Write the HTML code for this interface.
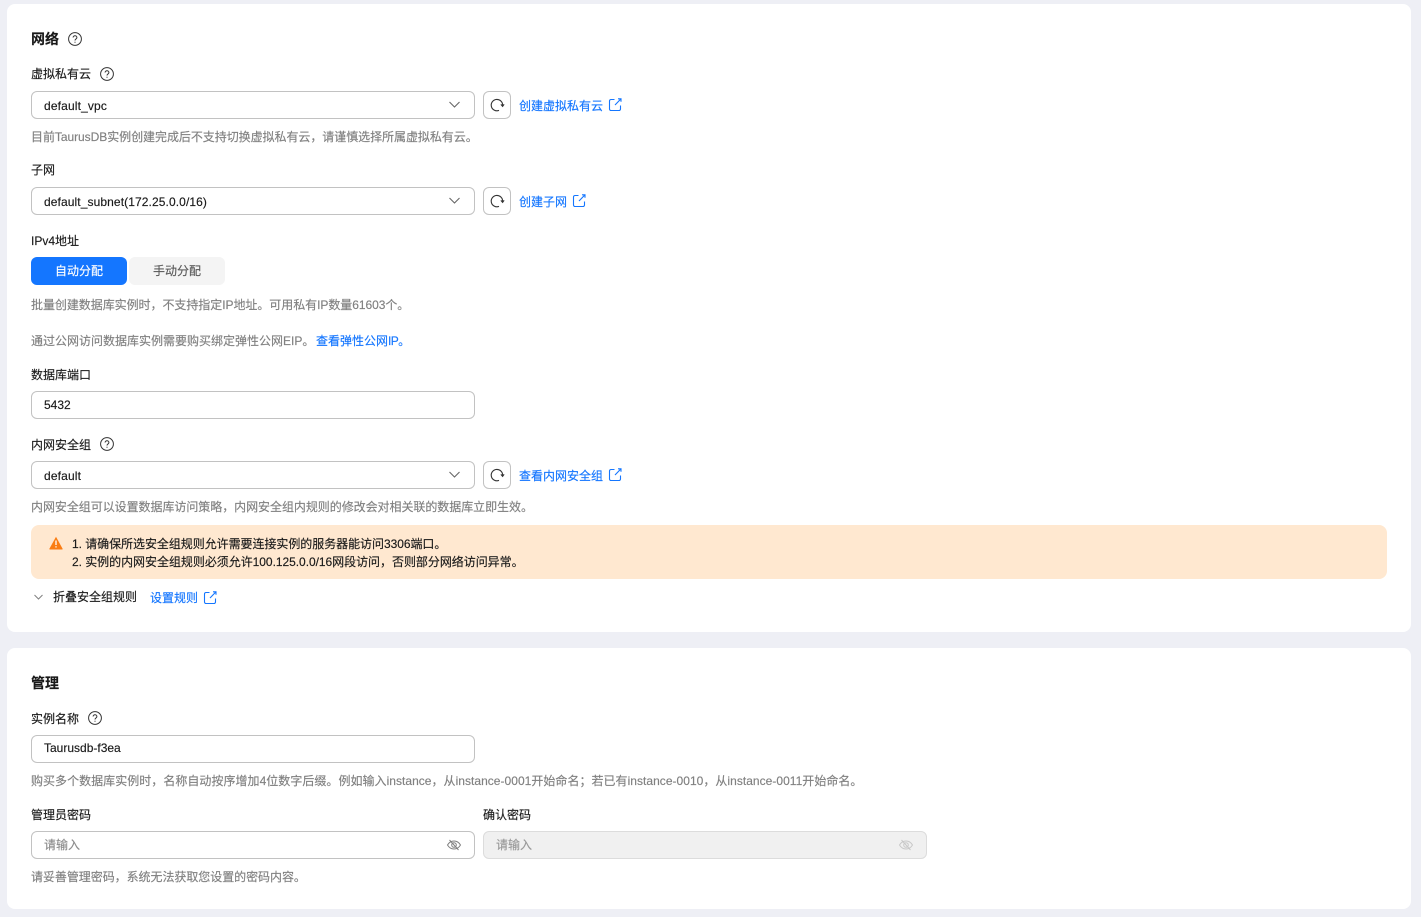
<!DOCTYPE html>
<html lang="zh"><head><meta charset="utf-8"><title>网络</title>
<style>
html,body{margin:0;padding:0;width:1421px;height:917px;overflow:hidden;background:#eeeff5}
body{position:relative;font-family:"Liberation Sans","Noto Sans CJK SC",sans-serif;font-size:12px;color:#191919}
.card{position:absolute;left:7px;width:1404px;background:#fff;border-radius:8px}
.t{position:absolute;white-space:nowrap;line-height:18px;height:18px;-webkit-text-stroke:.15px currentColor}
.h{font-size:14px;font-weight:700;line-height:20px;height:20px;color:#191919}
.g{color:#808080}
.l{color:#1476ff}
.box{position:absolute;box-sizing:border-box;height:28px;border:1px solid #c2c2c2;border-radius:6px;background:#fff}
svg{position:absolute;overflow:visible;fill:none}
</style></head><body>
<div class="card" style="top:4px;height:628px"></div>
<div class="card" style="top:648px;height:261px"></div>

<div class="t h" style="left:31px;top:29px">网络</div>
<svg style="left:68px;top:32px" width="14" height="14" viewBox="0 0 14 14" stroke="#333"><circle cx="7" cy="7" r="6.4"/><path d="M5.100 5.500C5.100 4.400 6 3.800 7 3.800s1.900.7 1.900 1.700c0 1.500-1.900 1.500-1.900 3"/><path d="M7 9.700v1"/></svg>

<div class="t" style="left:31px;top:65px">虚拟私有云</div>
<svg style="left:100px;top:67px" width="14" height="14" viewBox="0 0 14 14" stroke="#333"><circle cx="7" cy="7" r="6.4"/><path d="M5.100 5.500C5.100 4.400 6 3.800 7 3.800s1.900.7 1.900 1.700c0 1.500-1.900 1.500-1.900 3"/><path d="M7 9.700v1"/></svg>

<div class="box" style="left:31px;top:91px;width:444px"></div>
<div class="t" style="left:44px;top:97px;letter-spacing:.15px">default_vpc</div>
<svg style="left:449px;top:101px" width="11" height="7" viewBox="0 0 11 7" stroke="#666" stroke-width="1.100"><path d="M.5 1l5 5 5-5"/></svg>
<div class="box" style="left:483px;top:91px;width:28px"></div>
<svg style="left:490px;top:98px" width="14" height="14" viewBox="0 0 14 14" stroke="#333" stroke-width="1.100"><path d="M9 12.400A5.700 5.700 0 1 1 12.600 7.600"/><path d="M10.900 6.400l1.700 2 1.500-2.100"/></svg>
<div class="t l" style="left:519px;top:97px">创建虚拟私有云</div>
<svg style="left:609px;top:98px" width="13" height="13" viewBox="0 0 13 13" stroke="#1476ff" stroke-width="1.100"><path d="M5.500 1.500H2A1.500 1.500 0 0 0 .5 3v8A1.500 1.500 0 0 0 2 12.500h8A1.500 1.500 0 0 0 11.500 11V7.500"/><path d="M6 7l5.800-6M9 .8h3v3"/></svg>
<div class="t g" style="left:31px;top:128px;letter-spacing:-.05px">目前TaurusDB实例创建完成后不支持切换虚拟私有云，请谨慎选择所属虚拟私有云。</div>

<div class="t" style="left:31px;top:161px">子网</div>
<div class="box" style="left:31px;top:187px;width:444px"></div>
<div class="t" style="left:44px;top:193px;letter-spacing:.1px">default_subnet(172.25.0.0/16)</div>
<svg style="left:449px;top:197px" width="11" height="7" viewBox="0 0 11 7" stroke="#666" stroke-width="1.100"><path d="M.5 1l5 5 5-5"/></svg>
<div class="box" style="left:483px;top:187px;width:28px"></div>
<svg style="left:490px;top:194px" width="14" height="14" viewBox="0 0 14 14" stroke="#333" stroke-width="1.100"><path d="M9 12.400A5.700 5.700 0 1 1 12.600 7.600"/><path d="M10.900 6.400l1.700 2 1.500-2.100"/></svg>
<div class="t l" style="left:519px;top:193px">创建子网</div>
<svg style="left:573px;top:194px" width="13" height="13" viewBox="0 0 13 13" stroke="#1476ff" stroke-width="1.100"><path d="M5.500 1.500H2A1.500 1.500 0 0 0 .5 3v8A1.500 1.500 0 0 0 2 12.500h8A1.500 1.500 0 0 0 11.500 11V7.500"/><path d="M6 7l5.800-6M9 .8h3v3"/></svg>

<div class="t" style="left:31px;top:232px">IPv4地址</div>
<div class="t" style="left:31px;top:257px;width:96px;height:28px;line-height:28px;background:#1476ff;border-radius:6px;color:#fff;text-align:center;-webkit-text-stroke:.15px #fff">自动分配</div>
<div class="t" style="left:129px;top:257px;width:96px;height:28px;line-height:28px;background:#f4f4f4;border-radius:6px;color:#595959;text-align:center">手动分配</div>
<div class="t g" style="left:31px;top:296px;letter-spacing:-.05px">批量创建数据库实例时，不支持指定IP地址。可用私有IP数量61603个。</div>
<div class="t g" style="left:31px;top:332px">通过公网访问数据库实例需要购买绑定弹性公网EIP。</div>
<div class="t l" style="left:316px;top:332px">查看弹性公网<span style="letter-spacing:-.6px">IP</span>。</div>

<div class="t" style="left:31px;top:366px">数据库端口</div>
<div class="box" style="left:31px;top:391px;width:444px"></div>
<div class="t" style="left:44px;top:396px">5432</div>

<div class="t" style="left:31px;top:436px">内网安全组</div>
<svg style="left:100px;top:437px" width="14" height="14" viewBox="0 0 14 14" stroke="#333"><circle cx="7" cy="7" r="6.4"/><path d="M5.100 5.500C5.100 4.400 6 3.800 7 3.800s1.900.7 1.900 1.700c0 1.500-1.900 1.500-1.900 3"/><path d="M7 9.700v1"/></svg>
<div class="box" style="left:31px;top:461px;width:444px"></div>
<div class="t" style="left:44px;top:467px;letter-spacing:.15px">default</div>
<svg style="left:449px;top:471px" width="11" height="7" viewBox="0 0 11 7" stroke="#666" stroke-width="1.100"><path d="M.5 1l5 5 5-5"/></svg>
<div class="box" style="left:483px;top:461px;width:28px"></div>
<svg style="left:490px;top:468px" width="14" height="14" viewBox="0 0 14 14" stroke="#333" stroke-width="1.100"><path d="M9 12.400A5.700 5.700 0 1 1 12.600 7.600"/><path d="M10.900 6.400l1.700 2 1.500-2.100"/></svg>
<div class="t l" style="left:519px;top:467px">查看内网安全组</div>
<svg style="left:609px;top:468px" width="13" height="13" viewBox="0 0 13 13" stroke="#1476ff" stroke-width="1.100"><path d="M5.500 1.500H2A1.500 1.500 0 0 0 .5 3v8A1.500 1.500 0 0 0 2 12.500h8A1.500 1.500 0 0 0 11.500 11V7.500"/><path d="M6 7l5.800-6M9 .8h3v3"/></svg>
<div class="t g" style="left:31px;top:498px;letter-spacing:-.05px">内网安全组可以设置数据库访问策略，内网安全组内规则的修改会对相关联的数据库立即生效。</div>

<div style="position:absolute;left:31px;top:525px;width:1356px;height:54px;background:#ffe8d0;border-radius:8px"></div>
<svg style="left:49px;top:536px" width="14" height="14" viewBox="0 0 14 14"><path d="M7 .8L13.600 12.800a.5.500 0 0 1-.4.700H.8a.5.500 0 0 1-.4-.700z" fill="#fa7d14"/><path d="M7 4.500v4.500M7 10.200v1.300" stroke="#fff" stroke-width="1.300"/></svg>
<div class="t" style="left:72px;top:535px;letter-spacing:-.05px">1. 请确保所选安全组规则允许需要连接实例的服务器能访问3306端口。</div>
<div class="t" style="left:72px;top:553px;letter-spacing:-.04px">2. 实例的内网安全组规则必须允许100.125.0.0/16网段访问，否则部分网络访问异常。</div>

<svg style="left:34px;top:594px" width="9" height="6" viewBox="0 0 9 6" stroke="#808080"><path d="M.5 1l4 4 4-4"/></svg>
<div class="t" style="left:53px;top:588px">折叠安全组规则</div>
<div class="t l" style="left:150px;top:589px">设置规则</div>
<svg style="left:204px;top:591px" width="13" height="13" viewBox="0 0 13 13" stroke="#1476ff" stroke-width="1.100"><path d="M5.500 1.500H2A1.500 1.500 0 0 0 .5 3v8A1.500 1.500 0 0 0 2 12.500h8A1.500 1.500 0 0 0 11.500 11V7.500"/><path d="M6 7l5.800-6M9 .8h3v3"/></svg>

<div class="t h" style="left:31px;top:673px">管理</div>
<div class="t" style="left:31px;top:710px">实例名称</div>
<svg style="left:88px;top:711px" width="14" height="14" viewBox="0 0 14 14" stroke="#333"><circle cx="7" cy="7" r="6.4"/><path d="M5.100 5.500C5.100 4.400 6 3.800 7 3.800s1.900.7 1.900 1.700c0 1.500-1.900 1.500-1.900 3"/><path d="M7 9.700v1"/></svg>
<div class="box" style="left:31px;top:735px;width:444px"></div>
<div class="t" style="left:44px;top:739px">Taurusdb-f3ea</div>
<div class="t g" style="left:31px;top:772px;letter-spacing:.03px">购买多个数据库实例时，名称自动按序增加4位数字后缀。例如输入instance，从instance-0001开始命名；若已有instance-0010，从instance-0011开始命名。</div>

<div class="t" style="left:31px;top:806px">管理员密码</div>
<div class="t" style="left:483px;top:806px">确认密码</div>
<div class="box" style="left:31px;top:831px;width:444px"></div>
<div class="t" style="left:44px;top:836px;color:#8c8c8c">请输入</div>
<svg style="left:447px;top:839px" width="14" height="12" viewBox="0 0 14 12" stroke="#808080"><path d="M.5 6C2 3.500 4.300 2 7 2s5 1.500 6.500 4C12 8.500 9.700 10 7 10S2 8.500.5 6z"/><circle cx="7" cy="6" r="2.300"/><path d="M2.500 1l9 10"/></svg>
<div class="box" style="left:483px;top:831px;width:444px;background:#f0f0f0;border-color:#dcdcdc"></div>
<div class="t" style="left:496px;top:836px;color:#999">请输入</div>
<svg style="left:899px;top:839px" width="14" height="12" viewBox="0 0 14 12" stroke="#c8c8c8"><path d="M.5 6C2 3.500 4.300 2 7 2s5 1.500 6.500 4C12 8.500 9.700 10 7 10S2 8.500.5 6z"/><circle cx="7" cy="6" r="2.300"/><path d="M2.500 1l9 10"/></svg>
<div class="t g" style="left:31px;top:868px;letter-spacing:-.05px">请妥善管理密码，系统无法获取您设置的密码内容。</div>
</body></html>
